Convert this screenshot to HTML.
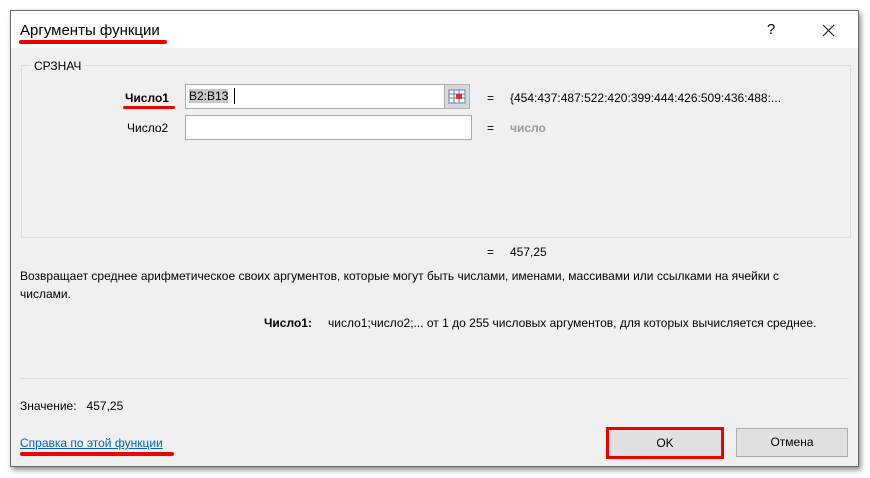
<!DOCTYPE html>
<html><head><meta charset="utf-8"><style>
body{margin:0;width:870px;height:478px;background:#fff;font-family:"Liberation Sans",sans-serif;font-size:12px;color:#000;position:relative;overflow:hidden}
.a{position:absolute}
.dlg{left:10px;top:10px;width:847px;height:455px;background:#f0f0f0;border:1px solid #6b6b6b;box-shadow:2px 3px 5px rgba(0,0,0,.45)}
.title{left:0;top:0;width:847px;height:37px;background:#fff}
.red{background:#e00;border-radius:2px;height:4px}
.inp{background:#fff;border:1px solid #a9a9a9}
</style></head><body>
<div class="a dlg">
 <div class="a title"></div>
 <div class="a" style="left:9px;top:11px;font-size:15px">Аргументы функции</div>
 <div class="a red" style="left:8px;top:29px;width:148px"></div>
 <div class="a" style="left:756px;top:10px;font-size:15px">?</div>
 <svg class="a" style="left:811px;top:13px" width="13" height="13"><path d="M1 1L12 12M12 1L1 12" stroke="#222" stroke-width="1.2"/></svg>
 <div class="a" style="left:10px;top:54px;width:828px;height:171px;border:1px solid #dcdcdc"></div>
 <div class="a" style="left:20px;top:48px;background:#f0f0f0;padding:0 3px">СРЗНАЧ</div>
 <div class="a" style="left:114px;top:80px;font-weight:bold">Число1</div>
 <div class="a red" style="left:112px;top:95px;width:52px;height:3px"></div>
 <div class="a" style="left:116px;top:110px">Число2</div>
 <div class="a inp" style="left:174px;top:73px;width:258px;height:23px"><span style="position:absolute;left:3px;top:4px;background:#c8c8c8">B2:B13</span><span style="position:absolute;left:48px;top:3px;width:1px;height:16px;background:#000"></span></div>
 <div class="a" style="left:433px;top:73px;width:26px;height:25px;background:#d8d8d8;border:1px solid #b0b0b0;box-sizing:border-box">
  <svg width="24" height="23"><rect x="4" y="5" width="16" height="13" fill="#fff" stroke="#5a7fb0"/><path d="M4 9H20M4 13H20M9 5V18M14 5V18" stroke="#5a7fb0"/><rect x="11" y="9" width="6" height="5" fill="#d33"/></svg>
 </div>
 <div class="a inp" style="left:174px;top:104px;width:285px;height:23px"></div>
 <div class="a" style="left:476px;top:80px">=</div>
 <div class="a" style="left:499px;top:80px">{454:437:487:522:420:399:444:426:509:436:488:...</div>
 <div class="a" style="left:476px;top:110px">=</div>
 <div class="a" style="left:499px;top:110px;color:#999;font-weight:bold">число</div>
 <div class="a" style="left:476px;top:234px">=</div>
 <div class="a" style="left:499px;top:234px">457,25</div>
 <div class="a" style="left:9px;top:256px;width:812px;line-height:18px">Возвращает среднее арифметическое своих аргументов, которые могут быть числами, именами, массивами или ссылками на ячейки с числами.</div>
 <div class="a" style="left:253px;top:305px;font-weight:bold">Число1:</div>
 <div class="a" style="left:317px;top:305px">число1;число2;... от 1 до 255 числовых аргументов, для которых вычисляется среднее.</div>
 <div class="a" style="left:9px;top:367px;width:829px;height:1px;background:#dcdcdc"></div>
 <div class="a" style="left:9px;top:388px">Значение:&nbsp;&nbsp;&nbsp;457,25</div>
 <div class="a" style="left:9px;top:425px;color:#0563c1;text-decoration:underline">Справка по этой функции</div>
 <div class="a red" style="left:9px;top:441px;width:154px"></div>
 <div class="a" style="left:595px;top:416px;width:112px;height:26px;border:3px solid #e00;background:#e1e1e1;text-align:center;line-height:26px">OK</div>
 <div class="a" style="left:725px;top:417px;width:110px;height:27px;border:1px solid #adadad;background:#e1e1e1;text-align:center;line-height:27px">Отмена</div>
</div>
</body></html>
